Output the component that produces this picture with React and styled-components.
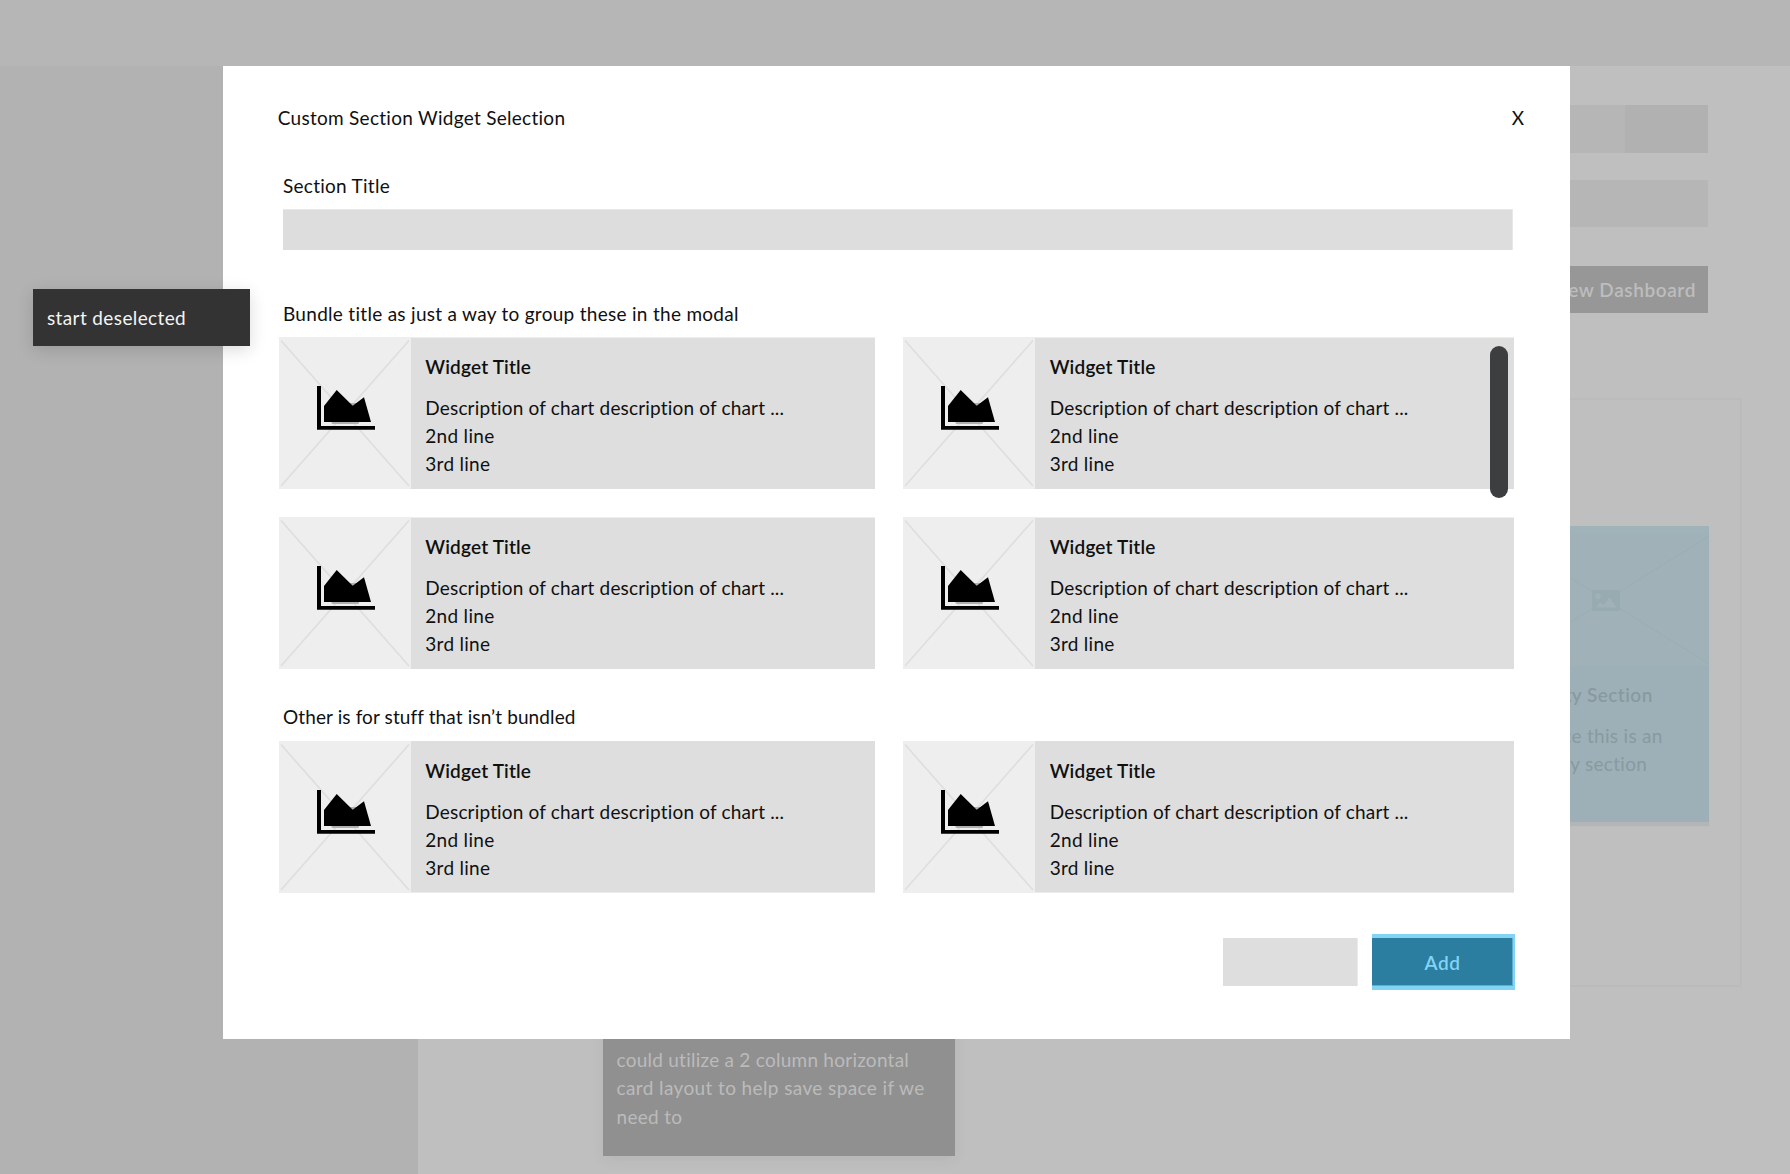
import React from "react";
import styled, { createGlobalStyle } from "styled-components";

const Global = createGlobalStyle`
  * { box-sizing: border-box; }
  body {
    margin: 0;
    overflow: hidden;
    background: #bfbfbf;
    font-family: Lato, "Liberation Sans", sans-serif;
    font-size: 19px;
    line-height: 28px;
    font-variant-ligatures: none;
    color: #101010;
  }
`;

const Page = styled.div`
  position: relative;
  display: grid;
  grid-template: 66px 1fr / 418px 1fr;
  width: 1790px;
  height: 1174px;
  overflow: hidden;
`;

const TopBar = styled.header`
  grid-column: 1 / -1;
  background: #b6b6b6;
`;

const Sidebar = styled.aside`
  background: #b2b2b2;
`;

const Main = styled.main`
  display: flex;
  flex-direction: column;
  align-items: flex-end;
  padding: 39px 48px 0 82px;
`;

const FilterBar = styled.div`
  display: flex;
  justify-content: flex-end;
  width: 400px;
  height: ${(p) => p.$height}px;
  margin: 0 34px ${(p) => p.$gap}px 0;
  background: #b6b6b6;
`;

const FilterEnd = styled.div`
  width: 83px;
  background: #b1b1b1;
`;

const NewDashboard = styled.button`
  height: 47px;
  margin: 0 34px 85px 0;
  padding: 1px 12px 0 13px;
  border: 0;
  background: #979797;
  color: #bdbdbd;
  font: 600 19px/28px Lato, sans-serif;
  letter-spacing: 0.6px;
`;

const Board = styled.section`
  display: flex;
  justify-content: flex-end;
  align-items: flex-start;
  width: 1190px;
  height: 589px;
  padding: 126px 31px 0;
  border: 2px solid #bbb;
`;

const EmptyCard = styled.article`
  width: 206px;
  height: 296px;
  padding-top: 8px;
  background: #9db0b7;
  box-shadow: 0 4px 1px #b4b5b6;
`;

const EmptyArt = styled.svg`
  display: block;
  width: 206px;
  height: 132px;
  box-shadow: 0 -8px 0 #a0b3b9;
  background: #a0b2b8;
`;

const EmptyText = styled.div`
  padding: 15px 0 0 22px;
  color: #889a9f;
  white-space: nowrap;
`;

const EmptyTitle = styled.div`
  margin-bottom: 13px;
  padding-left: 1px;
  font-weight: 600;
  letter-spacing: 0.45px;
`;

const EmptyLine = styled.div`
  padding-left: ${(p) => p.$indent}px;
  letter-spacing: 0.3px;
`;

const StickyNote = styled.aside`
  position: absolute;
  left: 602.5px;
  top: 1000px;
  width: 352px;
  height: 156px;
  padding: 46px 14px 0;
  background: #909090;
  box-shadow: 0 4px 14px rgba(0, 0, 0, 0.05);
  color: #bbb;
  white-space: nowrap;
`;

const NoteLine = styled.div`
  height: 28.3px;
  letter-spacing: ${(p) => p.$track}px;
`;

const Modal = styled.div`
  position: absolute;
  left: 223px;
  top: 66px;
  display: flex;
  flex-direction: column;
  width: 1347px;
  height: 973px;
  padding: 38px 55px 0 56px;
  background: #fff;
`;

const ModalHeader = styled.header`
  display: flex;
  justify-content: space-between;
  height: 28px;
  margin: 0 -9px 40px -1.3px;
`;

const Title = styled.h1`
  margin: 0;
  font: inherit;
  letter-spacing: 0.28px;
`;

const Close = styled.button`
  padding: 0;
  border: 0;
  background: none;
  color: #101010;
  font: inherit;
`;

const Label = styled.label`
  display: block;
  height: 28px;
  margin: 0 0 ${(p) => p.$gap ?? 9}px 4px;
  letter-spacing: ${(p) => p.$track}px;
`;

const TitleInput = styled.input`
  display: block;
  width: 1230px;
  height: 41px;
  margin: 0 0 50px 4px;
  border: 0;
  border-radius: 0;
  box-shadow: inset 0 1px #e8e8e8, inset -1px 0 #e8e8e8;
  background: #ddd;
`;

const CardGrid = styled.div`
  display: grid;
  grid-template-columns: 596.4px 610.6px;
  grid-auto-rows: 152px;
  gap: 28px;
  margin-bottom: ${(p) => p.$after}px;
`;

const Card = styled.article`
  display: flex;
  background: #dedede;
  box-shadow: ${(p) => (p.$low ? "inset 0 -1px #eaeaea" : "inset 0 1px #eee")};
`;

const Thumb = styled.svg`
  flex: none;
  width: 132px;
  height: 152px;
  background: #eee;
`;

const CardBody = styled.div`
  flex: 1;
  padding: 16px 0 0 14.3px;
`;

const CardTitle = styled.h2`
  margin: 0 0 13px;
  font: inherit;
  font-weight: 600;
  letter-spacing: 0.18px;
`;

const CardLine = styled.div`
  height: 28px;
  letter-spacing: ${(p) => p.$track}px;
`;

const Footer = styled.footer`
  display: flex;
  justify-content: flex-end;
  align-items: center;
  gap: 14px;
`;

const SecondaryButton = styled.button`
  width: 135px;
  height: 48px;
  border: 0;
  box-shadow: inset -1px 0 #eaeaea;
  background: #dedede;
`;

const AddButton = styled.button`
  width: 143px;
  height: 56px;
  padding: 1px 0 0;
  border: solid #82d4f5;
  border-width: 4px 2px 4px 0;
  box-shadow: inset -1px -1px #60acca;
  background: #2c7ea1;
  color: #82d4f5;
  font: 600 19px/28px Lato, sans-serif;
  letter-spacing: 0.5px;
`;

const ScrollThumb = styled.div`
  position: absolute;
  left: 1267px;
  top: 280px;
  width: 18px;
  height: 152px;
  border-radius: 9px;
  background: #3d3e40;
`;

const Hint = styled.aside`
  position: absolute;
  left: 33px;
  top: 289px;
  width: 216.5px;
  height: 57px;
  padding: 15px 14px;
  background: #333;
  box-shadow: 0 4px 16px rgba(0, 0, 0, 0.14);
  color: #f4f4f4;
  letter-spacing: 0.38px;
`;

function ChartThumb() {
  return (
    <Thumb viewBox="0 0 132 152" aria-hidden="true">
      <path d="M2 3.5 130 149M130 3.5 2 149" stroke="#dedede" strokeWidth="1.6" fill="none" />
      <rect x="52.5" y="66" width="27.5" height="21" rx="1.5" fill="#b0b0b0" />
      <path d="M38 49h4v40h54v3.7H38Z" />
      <path d="M45 85V69L57.7 53 73.7 68.7 85 60.3 92 85Z" />
    </Thumb>
  );
}

function WidgetCard({ low }) {
  return (
    <Card $low={low}>
      <ChartThumb />
      <CardBody>
        <CardTitle>Widget Title</CardTitle>
        <CardLine $track={0.17}>Description of chart description of chart ...</CardLine>
        <CardLine $track={0.3}>2nd line</CardLine>
        <CardLine $track={0.27}>3rd line</CardLine>
      </CardBody>
    </Card>
  );
}

export default function App() {
  return (
    <Page>
      <Global />
      <TopBar />
      <Sidebar />
      <Main>
        <FilterBar $height={48} $gap={27}>
          <FilterEnd />
        </FilterBar>
        <FilterBar $height={47} $gap={39} />
        <NewDashboard>New Dashboard</NewDashboard>
        <Board>
          <EmptyCard>
            <EmptyArt viewBox="0 0 206 132" aria-hidden="true">
              <path d="M0 2 206 130M206 2 0 130" stroke="#9bafb6" strokeWidth="1.3" fill="none" />
              <rect x="89" y="56" width="28" height="21" rx="2" fill="#98abb1" />
              <circle cx="95" cy="62.3" r="2.7" fill="#a0b2b8" />
              <path d="m93 73.5 4.2-5.2 3.3 3 6.2-8 7 10.2Z" fill="#a0b2b8" />
            </EmptyArt>
            <EmptyText>
              <EmptyTitle>Empty Section</EmptyTitle>
              <EmptyLine $indent={11}>Since this is an</EmptyLine>
              <EmptyLine $indent={1}>empty section</EmptyLine>
            </EmptyText>
          </EmptyCard>
        </Board>
      </Main>
      <StickyNote>
        <NoteLine $track={0.25}>could utilize a 2 column horizontal</NoteLine>
        <NoteLine $track={0.39}>card layout to help save space if we</NoteLine>
        <NoteLine $track={0.3}>need to</NoteLine>
      </StickyNote>
      <Modal>
        <ModalHeader>
          <Title>Custom Section Widget Selection</Title>
          <Close>X</Close>
        </ModalHeader>
        <Label $track={0.27}>Section Title</Label>
        <TitleInput />
        <Label $track={0.29}>Bundle title as just a way to group these in the modal</Label>
        <CardGrid $after={34}>
          <WidgetCard />
          <WidgetCard />
          <WidgetCard />
          <WidgetCard />
        </CardGrid>
        <Label $track={0.11} $gap={10}>Other is for stuff that isn’t bundled</Label>
        <CardGrid $after={41}>
          <WidgetCard low />
          <WidgetCard low />
        </CardGrid>
        <Footer>
          <SecondaryButton />
          <AddButton>Add</AddButton>
        </Footer>
        <ScrollThumb />
      </Modal>
      <Hint>start deselected</Hint>
    </Page>
  );
}
